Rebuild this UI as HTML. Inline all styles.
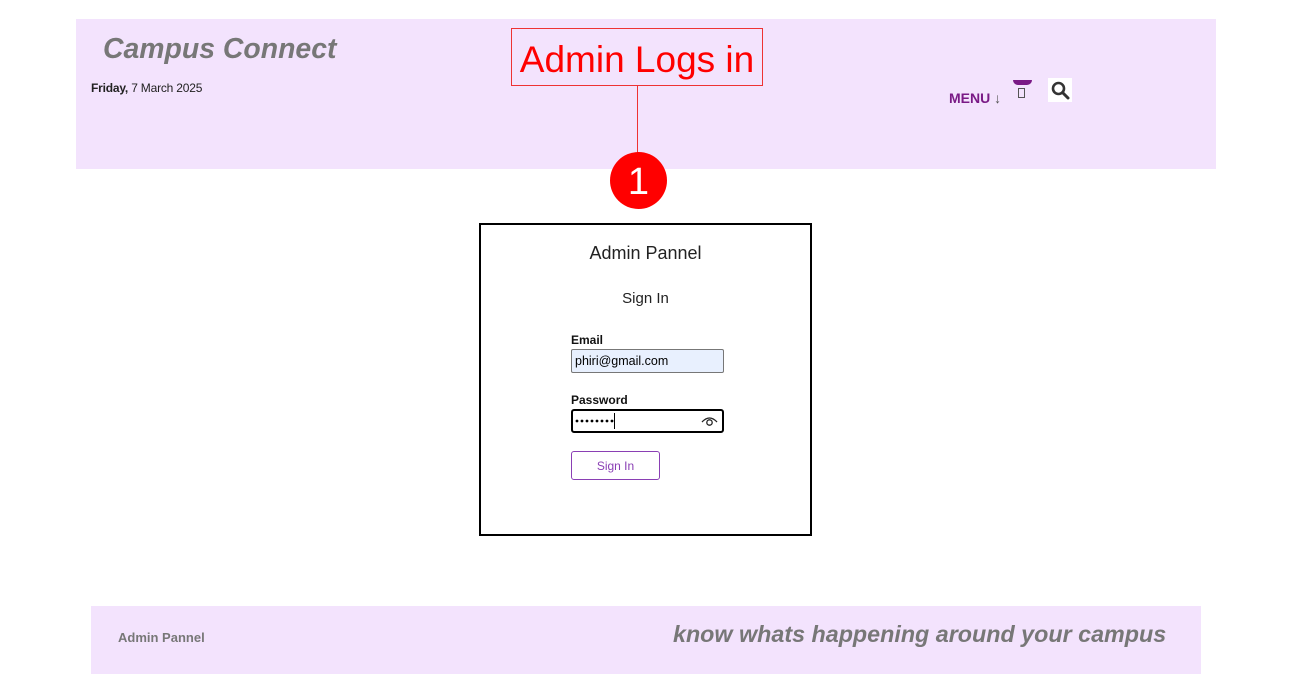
<!DOCTYPE html>
<html><head><style>
*{margin:0;padding:0;box-sizing:border-box}
body{width:1295px;height:674px;background:#fff;font-family:"Liberation Sans",sans-serif;position:relative;overflow:hidden}
.a{position:absolute}
</style></head><body>
<div class="a" style="left:76px;top:19px;width:1140px;height:150px;background:#f3e3fd"></div>
<div class="a" style="left:103px;top:33px;font-size:28.4px;font-weight:bold;font-style:italic;color:#777">Campus Connect</div>
<div class="a" style="left:91px;top:81px;font-size:12px;color:#222;letter-spacing:-0.2px"><b>Friday,</b> 7 March 2025</div>
<div class="a" style="left:949px;top:90px;font-size:14px;font-weight:bold;color:#7a1a86">MENU <span style="font-weight:normal;color:#555">↓</span></div>
<div class="a" style="left:1013px;top:80px;width:19px;height:5px;background:#7a1a86;border-radius:0 0 8px 8px"></div>
<div class="a" style="left:1018px;top:88px;width:7px;height:10px;border:1px solid #555"></div>
<div class="a" style="left:1048px;top:78px;width:24px;height:24px;background:#fff"></div>
<svg class="a" style="left:1051px;top:81px" width="19" height="19" viewBox="0 0 19 19"><circle cx="7.5" cy="7.5" r="5.5" fill="none" stroke="#333" stroke-width="2.6"/><line x1="11.5" y1="11.5" x2="17" y2="17" stroke="#333" stroke-width="3" stroke-linecap="round"/></svg>
<div class="a" style="left:511px;top:28px;width:252px;height:58px;border:1px solid #e33;font-size:37px;color:#f00;text-align:center;line-height:62px">Admin Logs in</div>
<div class="a" style="left:637px;top:86px;width:1px;height:68px;background:#e33"></div>
<div class="a" style="left:610px;top:152px;width:57px;height:57px;border-radius:50%;background:#f00;color:#fff;font-size:38px;text-align:center;line-height:60px">1</div>
<div class="a" style="left:479px;top:223px;width:333px;height:313px;border:2px solid #000"></div>
<div class="a" style="left:479px;top:243px;width:333px;text-align:center;font-size:18px;color:#222">Admin Pannel</div>
<div class="a" style="left:479px;top:290px;width:333px;text-align:center;font-size:15px;color:#222">Sign In</div>
<div class="a" style="left:571px;top:333px;font-size:12px;font-weight:bold;color:#111">Email</div>
<div class="a" style="left:571px;top:349px;width:153px;height:24px;background:#e8f0fe;border:1px solid #777;border-radius:2px;font-size:12.5px;padding:4px 3px;color:#000">phiri@gmail.com</div>
<div class="a" style="left:571px;top:393px;font-size:12px;font-weight:bold;color:#111">Password</div>
<svg class="a" style="left:575px;top:418px" width="45" height="8" viewBox="0 0 45 8"><g fill="#000"><circle cx="2" cy="3" r="1.4"/><circle cx="7" cy="3" r="1.4"/><circle cx="12" cy="3" r="1.4"/><circle cx="17" cy="3" r="1.4"/><circle cx="22" cy="3" r="1.4"/><circle cx="27" cy="3" r="1.4"/><circle cx="32" cy="3" r="1.4"/><circle cx="37" cy="3" r="1.4"/></g></svg>
<div class="a" style="left:571px;top:409px;width:153px;height:24px;border:2px solid #000;border-radius:3px"></div>
<div class="a" style="left:614px;top:413px;width:1px;height:16px;background:#000"></div>
<svg class="a" style="left:701px;top:415px" width="17" height="12" viewBox="0 0 17 12"><path d="M1 7 Q8.5 -1 16 7" fill="none" stroke="#222" stroke-width="1.3"/><circle cx="8.5" cy="7.5" r="2.7" fill="none" stroke="#222" stroke-width="1.3"/></svg>
<div class="a" style="left:571px;top:451px;width:89px;height:29px;border:1px solid #8a3fb4;border-radius:3px;font-size:12px;color:#8a3fb4;text-align:center;line-height:28px">Sign In</div>
<div class="a" style="left:91px;top:606px;width:1110px;height:68px;background:#f3e3fd"></div>
<div class="a" style="left:118px;top:630px;font-size:13px;font-weight:bold;color:#777">Admin Pannel</div>
<div class="a" style="left:673px;top:621px;font-size:23.3px;font-weight:bold;font-style:italic;color:#777">know whats happening around your campus</div>
</body></html>
